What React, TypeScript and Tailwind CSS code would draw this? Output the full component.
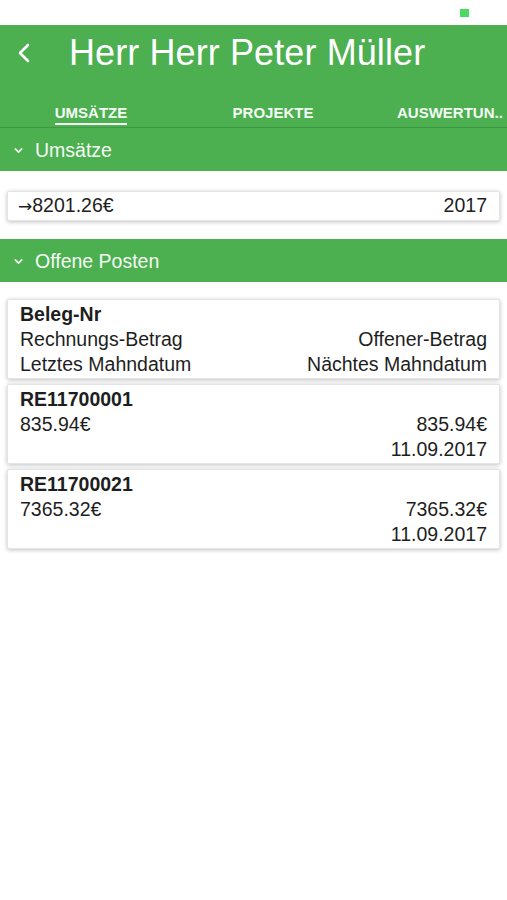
import { ChevronDown } from "lucide-react";

const font = { fontFamily: '"Liberation Sans", Arial, sans-serif' };

function SectionHeader({ title }: { title: string }) {
  return (
    <div className="h-[43px] bg-[#4caf50] flex items-center pt-[2px] text-[#f4fbf4]">
      <ChevronDown size={13} strokeWidth={3} className="ml-[12px] mr-[10px]" />
      <span className="text-[19.5px] leading-none">{title}</span>
    </div>
  );
}

function Card({ children, className = "" }: any) {
  return (
    <div
      className={`mx-[7px] bg-white rounded-[2px] border border-[#e4e4e4] shadow-[0_1px_4px_rgba(0,0,0,0.25)] px-[12px] ${className}`}
    >
      {children}
    </div>
  );
}

const rows = [
  { nr: "RE11700001", amount: "835.94€", open: "835.94€", date: "11.09.2017" },
  { nr: "RE11700021", amount: "7365.32€", open: "7365.32€", date: "11.09.2017" },
];

export default function App() {
  return (
    <div className="w-[507px] h-[900px] bg-white overflow-hidden text-[#1e1e1e]" style={font}>
      {/* status bar */}
      <div className="h-[25px] flex justify-end pr-[38px] pt-[9px]">
        <div className="w-[9px] h-[8px] bg-[#4cd964]" />
      </div>

      {/* header */}
      <div className="bg-[#4caf50] border-b border-[#3f9843]">
        <div className="h-[56px] flex items-center">
          <svg width="14" height="20" viewBox="0 0 14 20" className="ml-[17px]">
            <path d="M11 2 L3 10 L11 18" fill="none" stroke="white" strokeWidth="2.6" strokeLinecap="round" strokeLinejoin="round" />
          </svg>
          <h1 className="ml-[38px] text-white text-[36px] leading-none tracking-[0.1px]">
            Herr Herr Peter Müller
          </h1>
        </div>
        <div className="h-[46px] flex overflow-hidden whitespace-nowrap">
          <div className="w-[182px] shrink-0 flex justify-center pt-[23px]">
            <span className="text-[15px] font-bold leading-[17px] text-[#f4fbf4] border-b-2 border-[#f4fbf4] h-[21px]">
              UMSÄTZE
            </span>
          </div>
          <div className="w-[182px] shrink-0 flex justify-center pt-[23px]">
            <span className="text-[15px] font-bold leading-[17px] text-[#f4fbf4]">PROJEKTE</span>
          </div>
          <div className="w-[182px] shrink-0 flex pl-[33px] pt-[23px]">
            <span className="text-[15px] font-bold leading-[17px] text-[#f4fbf4]">AUSWERTUN..</span>
          </div>
        </div>
      </div>

      <SectionHeader title="Umsätze" />

      <div className="pt-[20px] pb-[18px]">
        <Card className="h-[30px] flex items-center justify-between text-[19.5px] pl-[10px]">
          <span>
            <span style={{ fontFamily: '"DejaVu Sans", sans-serif' }} className="text-[17px]">→</span>
            8201.26€
          </span>
          <span>2017</span>
        </Card>
      </div>

      <SectionHeader title="Offene Posten" />

      <div className="pt-[17px] flex flex-col gap-[5px]">
        <Card className="pt-[2px] pb-[1px] text-[19.5px] leading-[25px]">
          <div className="font-bold">Beleg-Nr</div>
          <div className="flex justify-between">
            <span>Rechnungs-Betrag</span>
            <span>Offener-Betrag</span>
          </div>
          <div className="flex justify-between">
            <span>Letztes Mahndatum</span>
            <span>Nächtes Mahndatum</span>
          </div>
        </Card>
        {rows.map((r) => (
          <Card key={r.nr} className="pt-[2px] pb-[1px] text-[19.5px] leading-[25px]">
            <div className="font-bold">{r.nr}</div>
            <div className="flex justify-between">
              <span>{r.amount}</span>
              <span>{r.open}</span>
            </div>
            <div className="flex justify-end">
              <span>{r.date}</span>
            </div>
          </Card>
        ))}
      </div>
    </div>
  );
}
